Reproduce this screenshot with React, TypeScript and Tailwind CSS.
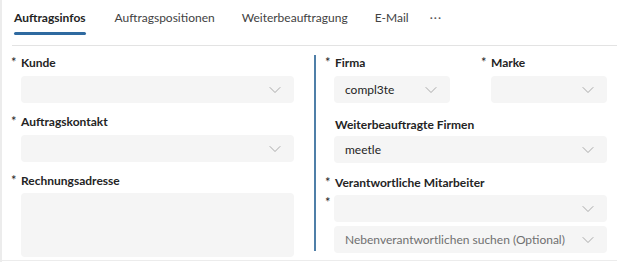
import { ChevronDown } from "lucide-react";

const font = { fontFamily: '"Segoe UI", Lato, "Noto Sans", sans-serif' };

function Select({ value, placeholder, className = "" }: { value?: string; placeholder?: string; className?: string }) {
  return (
    <div className={`h-[27px] bg-[#f5f5f5] rounded-[4px] flex items-center justify-between pl-[11px] pr-[9px] ${className}`}>
      <span className={`whitespace-nowrap text-[12px] ${value ? "text-[#242424]" : "text-[#707070]"}`}>{value ?? placeholder ?? ""}</span>
      <ChevronDown className="w-[20px] h-[20px] text-[#8f8f8f]" strokeWidth={0.9} />
    </div>
  );
}

function Label({ text, required = true }: { text: string; required?: boolean }) {
  return (
    <div className="h-[20px] flex items-center text-[12px] font-bold text-[#242424]">
      <span className="w-[10px] font-normal text-[13px] leading-[13px] -mt-[2px]">{required ? "*" : ""}</span>
      {text}
    </div>
  );
}

export default function App() {
  return (
    <div className="w-[627px] h-[262px] bg-white border-l-2 border-[#ececec] overflow-hidden" style={font}>
      {/* Tabs */}
      <div className="mx-[10px] h-[46px] border-b border-[#e3e3e3] flex items-start">
        <div className="flex items-start gap-[27px] text-[12px] text-[#424242]">
          <div className="flex flex-col items-center px-[2px]">
            <span className="pt-[8px] leading-[20px] font-bold text-[#242424]">Auftragsinfos</span>
            <span className="mt-[4px] h-[3px] w-full bg-[#2f6aa0] rounded-full" />
          </div>
          <span className="pt-[8px] leading-[20px]">Auftragspositionen</span>
          <span className="pt-[8px] leading-[20px]">Weiterbeauftragung</span>
          <span className="pt-[8px] leading-[20px]">E-Mail</span>
          <span className="pt-[8px] leading-[20px] -ml-[6px] text-[#555] tracking-[1px]">···</span>
        </div>
      </div>

      {/* Form */}
      <div className="flex pt-[7px] pl-[9px] h-[215px] mr-[10px] border-b border-[#ececec]">
        <div className="w-[283px] flex flex-col">
          <Label text="Kunde" />
          <Select className="mt-[3px] ml-[10px]" />
          <div className="mt-[9px]">
            <Label text="Auftragskontakt" />
          </div>
          <Select className="mt-[3px] ml-[10px]" />
          <div className="mt-[9px]">
            <Label text="Rechnungsadresse" />
          </div>
          <div className="mt-[2px] ml-[10px] h-[64px] bg-[#f5f5f5] rounded-[4px]" />
        </div>

        <div className="ml-[20px] mt-[2px] h-[196px] w-[2px] bg-[#4f7fa8]" />

        <div className="ml-[9px] w-[282px] flex flex-col">
          <div className="flex">
            <div className="w-[156px] flex flex-col">
              <Label text="Firma" />
              <Select className="mt-[3px] ml-[9px] w-[116px]" value="compl3te" />
            </div>
            <div className="flex-1 flex flex-col">
              <Label text="Marke" />
              <Select className="mt-[3px] ml-[10px]" />
            </div>
          </div>
          <div className="mt-[12px]">
            <Label text="Weiterbeauftragte Firmen" required={false} />
          </div>
          <Select className="mt-[1px] ml-[9px]" value="meetle" />
          <div className="mt-[10px]">
            <Label text="Verantwortliche Mitarbeiter" />
          </div>
          <div className="mt-[2px] flex">
            <span className="w-[9px] text-[13px] text-[#242424] leading-[14px]">*</span>
            <Select className="flex-1" />
          </div>
          <Select className="mt-[4px] ml-[9px]" placeholder="Nebenverantwortlichen suchen (Optional)" />
        </div>
      </div>
    </div>
  );
}
